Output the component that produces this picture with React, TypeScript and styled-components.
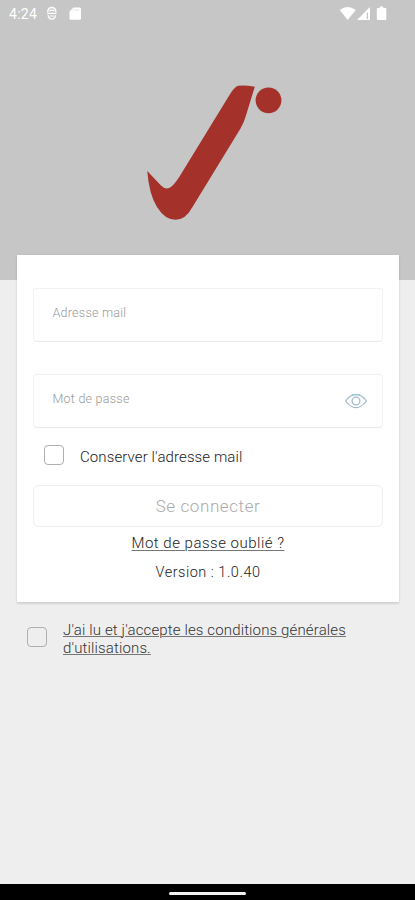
import React from "react";
import styled, { createGlobalStyle } from "styled-components";

const GlobalStyle = createGlobalStyle`
  * { box-sizing: border-box; }
  body { margin: 0; background: #eeeeee; font-family: Roboto, "Liberation Sans", sans-serif; }
`;

const Screen = styled.div`
  display: flex;
  flex-direction: column;
  height: 900px;
  overflow: hidden;
  background: #eeeeee;
`;

const Header = styled.header`
  flex: none;
  height: 280px;
  background: #c6c6c6;
`;

const StatusBar = styled.div`
  display: flex;
  justify-content: space-between;
  height: 28px;
  padding: 0 27px 0 9px;
  color: #fff;
`;

const StatusGroup = styled.div`
  display: flex;
  align-items: center;
`;

const Clock = styled.span`
  width: 37px;
  font-size: 14px;
  line-height: 28px;
  letter-spacing: 0.3px;
`;

const Logo = styled.svg`
  display: block;
  width: 140px;
  height: 140px;
  margin: 54px 0 0 145px;
  fill: #a4312a;
`;

const Card = styled.form`
  flex: none;
  display: flex;
  flex-direction: column;
  height: 347px;
  margin: -25px 16px 0 17px;
  padding: 33px 16px 0 16px;
  background: #fff;
  box-shadow: 0 2px 2px rgba(0, 0, 0, 0.11), 0 0 2px rgba(0, 0, 0, 0.07);
`;

const Field = styled.label`
  display: flex;
  flex: none;
  align-items: center;
  height: 54px;
  margin-bottom: 32px;
  padding: 0 15px 0 18.5px;
  border: 1.5px solid #f1f1f1;
  border-bottom-color: #eaeaea;
  border-radius: 4px;
`;

const Input = styled.input`
  flex: 1;
  min-width: 0;
  padding: 0 0 5px;
  border: 0;
  outline: 0;
  background: none;
  font: 300 12.5px Roboto, sans-serif;
  letter-spacing: 0.25px;
  &::placeholder { color: #999; opacity: 1; }
`;

const CheckRow = styled.label<{ $terms?: boolean }>`
  display: flex;
  flex: none;
  align-items: ${(p) => (p.$terms ? "flex-start" : "center")};
  gap: 16px;
  height: ${(p) => (p.$terms ? "32px" : "22px")};
  margin: ${(p) => (p.$terms ? "25px 0 0 27px" : "-16px 0 0 11px")};
`;

const Checkbox = styled.input`
  appearance: none;
  flex: none;
  width: 20px;
  height: 20px;
  margin: 0;
  border: 1.5px solid #b0b0b0;
  border-radius: 4px;
`;

const Label = styled.span`
  margin-top: 3px;
  color: #222;
  font-size: 15px;
  font-weight: 300;
  letter-spacing: 0.11px;
  white-space: nowrap;
`;

const TermsLink = styled.span`
  margin-top: -6px;
  color: #333;
  font-size: 15px;
  font-weight: 300;
  line-height: 18px;
  letter-spacing: 0.14px;
  text-decoration: underline;
  text-decoration-color: #777;
  text-decoration-thickness: 1px;
  text-underline-offset: 1px;
  white-space: nowrap;
`;

const Submit = styled.button`
  flex: none;
  height: 42px;
  margin: 19px 0 0;
  padding: 0;
  border: 1.5px solid #eeeeee;
  border-radius: 6px;
  background: #fff;
  color: #aaa;
  font: 300 17px Roboto, sans-serif;
  letter-spacing: 0.6px;
`;

const CenterText = styled.div<{ $link?: boolean }>`
  align-self: center;
  margin-top: ${(p) => (p.$link ? "6px" : "10px")};
  color: #222;
  font-size: ${(p) => (p.$link ? "15px" : "14.5px")};
  font-weight: 300;
  line-height: 20px;
  letter-spacing: 0.5px;
  text-decoration: ${(p) => (p.$link ? "underline" : "none")};
  text-decoration-color: #777;
  text-decoration-thickness: 1px;
  text-underline-offset: 2px;
`;

const NavigationBar = styled.footer`
  display: flex;
  justify-content: center;
  align-items: center;
  height: 16px;
  margin-top: auto;
  padding-top: 2px;
  background: #000;
`;

const HomeHandle = styled.div`
  width: 77px;
  height: 3px;
  border-radius: 2px;
  background: #f2f2f2;
`;

const LeftIcons = () => (
  <svg width="40" height="28" viewBox="46 0 40 28">
    <path d="M47.6 12q.6-4.5 4.2-4.5T56 12M48 15.2q.8 4 3.8 4t3.8-4" fill="none" stroke="#fff" strokeWidth="1.3" />
    <path d="M49.3 11q2.5-1.8 5 0M47 13.4h9.6M49.8 16h4" fill="none" stroke="#fff" strokeWidth="1.2" />
    <path d="M73.5 7.5h6q1.5 0 1.5 1.5v9.5q0 1.3-1.3 1.3h-8.9q-1.3 0-1.3-1.3v-7z" fill="#fff" />
    <path d="M74 9v2.2M76.2 9v2.2M78.4 9v2.2" stroke="#ddd" strokeWidth=".7" />
  </svg>
);

const RightIcons = () => (
  <svg width="50" height="28" viewBox="338 0 50 28" fill="#fff">
    <path d="M339.7 10.1q8-6.2 16 0l-8 10z" />
    <path d="M370 7v13h-13z" />
    <path d="M367.4 12.4v6.6" stroke="#c6c6c6" strokeWidth="1.2" />
    <path d="M379.8 6.5h3.4v1.4h2q1.1 0 1.1 1.1v9.8q0 1.2-1.1 1.2h-7.3q-1.1 0-1.1-1.2V9q0-1.1 1.1-1.1h1.9z" />
  </svg>
);

const EyeIcon = () => (
  <svg width="22" height="16" viewBox="0 0 22 16" fill="none" stroke="#a3b9c9" strokeWidth="1.2">
    <path d="M.7 8Q5.3 1.4 11 1.4T21.3 8Q16.7 14.6 11 14.6T.7 8Z" />
    <circle cx="11" cy="8" r="3.9" />
    <path d="M7 1.8h8" stroke="#9bc7d9" />
  </svg>
);

export default function App() {
  return (
    <Screen>
      <GlobalStyle />
      <Header>
        <StatusBar>
          <StatusGroup><Clock>4:24</Clock><LeftIcons /></StatusGroup>
          <StatusGroup><RightIcons /></StatusGroup>
        </StatusBar>
        <Logo viewBox="145 82 140 140">
          <path d="M147.2 171L161 185.5Q166.5 191 171.5 186.5Q175.5 183 180 175.7L229.5 95Q234.5 86.5 238.5 85.8Q244 84.8 254.8 86.8L245.8 116Q244 122.5 240.5 128.5L192.5 207Q185.5 219.8 175.5 219.8Q165 219.8 157 207Q149.3 195 147.2 171Z" />
          <circle cx="268.5" cy="100.3" r="12.9" />
        </Logo>
      </Header>
      <Card onSubmit={(e) => e.preventDefault()}>
        <Field><Input type="email" placeholder="Adresse mail" /></Field>
        <Field><Input type="password" placeholder="Mot de passe" /><EyeIcon /></Field>
        <CheckRow><Checkbox type="checkbox" /><Label>Conserver l'adresse mail</Label></CheckRow>
        <Submit>Se connecter</Submit>
        <CenterText $link>Mot de passe oublié ?</CenterText>
        <CenterText>Version : 1.0.40</CenterText>
      </Card>
      <CheckRow $terms>
        <Checkbox type="checkbox" />
        <TermsLink>J'ai lu et j'accepte les conditions générales<br />d'utilisations.</TermsLink>
      </CheckRow>
      <NavigationBar><HomeHandle /></NavigationBar>
    </Screen>
  );
}
